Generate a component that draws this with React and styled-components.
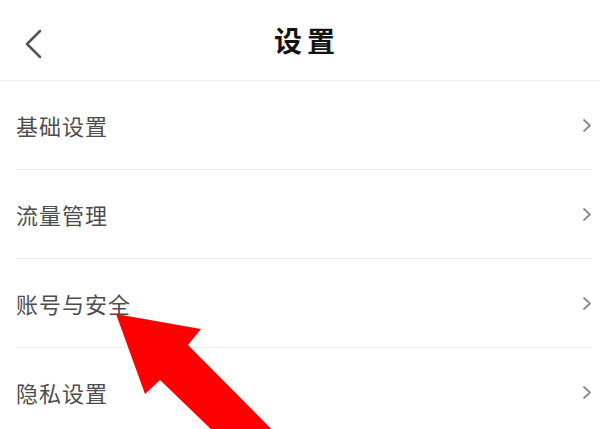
import styled, { createGlobalStyle } from 'styled-components';

const GlobalStyle = createGlobalStyle`
    html, body {
        margin: 0;
        padding: 0;
        background: #fff;
    }
    body {
        font-family: "Noto Sans CJK SC", "Noto Sans", sans-serif;
    }
`;

const Page = styled.div`
    position: relative;
    width: 600px;
    height: 429px;
    overflow: hidden;
    background: #fff;
`;

const Header = styled.div`
    height: 80px;
    display: flex;
    align-items: center;
    justify-content: center;
    position: relative;
    border-bottom: 1px solid #f0f0f0;
`;

const BackButton = styled.div`
    position: absolute;
    left: 24px;
    top: 29px;
    width: 20px;
    height: 30px;
    display: flex;
`;

const Title = styled.h1`
    margin: 0;
    font-size: 28px;
    font-weight: 700;
    color: #141414;
    letter-spacing: 5px;
    padding-left: 14px;
`;

const List = styled.ul`
    margin: 0;
    padding: 0 8px 0 16px;
    list-style: none;
`;

const Row = styled.li`
    height: 88px;
    display: flex;
    align-items: center;
    justify-content: space-between;
    border-bottom: ${props => props.last ? 'none' : '1px solid #ececec'};
`;

const Label = styled.span`
    font-size: 22px;
    color: #4d4d4d;
    letter-spacing: 1px;
`;

const Chevron = styled.svg`
    width: 10px;
    height: 15px;
`;

const Pointer = styled.svg`
    position: absolute;
    left: 0;
    top: 0;
    pointer-events: none;
`;

const items = ['基础设置', '流量管理', '账号与安全', '隐私设置'];

const App = () => {
  return (
    <Page>
        <GlobalStyle />
        <Header>
            <BackButton>
                <svg width="20" height="30" viewBox="0 0 20 30">
                    <path d="M16 2 L3 15 L16 28" fill="none" stroke="#555" strokeWidth="2.6" strokeLinecap="round" strokeLinejoin="round" />
                </svg>
            </BackButton>
            <Title>设置</Title>
        </Header>
        <List>
            {items.map((t, i) => (
                <Row key={t} last={i === items.length - 1}>
                    <Label>{t}</Label>
                    <Chevron viewBox="0 0 10 15">
                        <path d="M2 2 L8 7.5 L2 13" fill="none" stroke="#8a8a8a" strokeWidth="1.8" strokeLinecap="round" strokeLinejoin="round" />
                    </Chevron>
                </Row>
            ))}
        </List>
        <Pointer width="600" height="429" viewBox="0 0 600 429">
            <polygon points="116,314 201,329 188,345 302,460 243,460 160,380 145,394" fill="#ff0000" />
        </Pointer>
    </Page>
  )
}

export default App
